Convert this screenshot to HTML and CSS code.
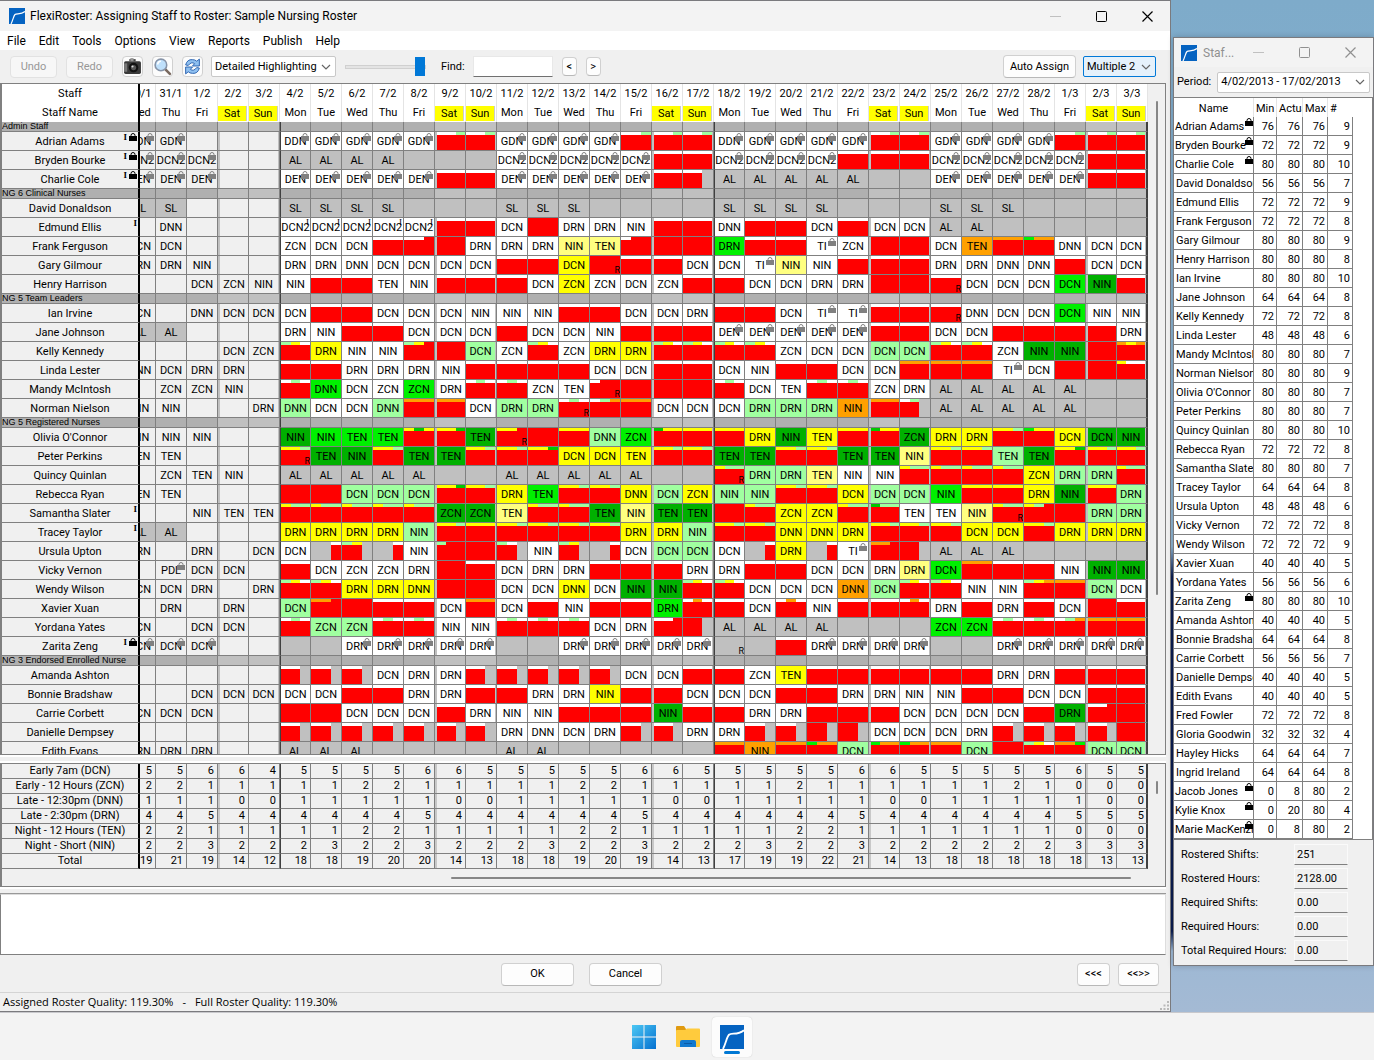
FILE: index.html
```html
<!DOCTYPE html>
<html lang="en">
<head>
<meta charset="utf-8">
<title>FlexiRoster: Assigning Staff to Roster: Sample Nursing Roster</title>
<link rel="stylesheet" href="styles.css">
</head>
<body>
<svg class="defs" aria-hidden="true">
  <symbol id="lock" viewBox="0 0 8 8"><path d="M2 4V2.500Q2 .5 4 .5T6 2.500V4" fill="none" stroke="currentColor"/><rect x="0" y="3" width="8" height="5" fill="currentColor"/></symbol>
  <symbol id="app" viewBox="0 0 16 16"><rect width="16" height="16" fill="#0563c1"/><path d="M2 16C4 12 4.500 8 6 6.500S12 7 16 3.500" fill="none" stroke="#fff" stroke-width="1.200"/></symbol>
  <symbol id="chev" viewBox="0 0 10 6"><path d="M1 1l4 4 4-4" fill="none" stroke="#666" stroke-width="1.200"/></symbol>
  <symbol id="min" viewBox="0 0 11 11"><path d="M0 5.500h11" stroke="currentColor"/></symbol>
  <symbol id="max" viewBox="0 0 11 11"><rect x=".5" y=".5" width="10" height="10" rx="1" fill="none" stroke="currentColor"/></symbol>
  <symbol id="close" viewBox="0 0 11 11"><path d="M.5.5l10 10M10.500.5l-10 10" stroke="currentColor" stroke-width="1.200"/></symbol>
</svg>
<div class="desktop">
  <main class="window main-window">
    <header class="titlebar">
      <svg class="app-icon"><use href="#app"/></svg>
      <h1>FlexiRoster: Assigning Staff to Roster: Sample Nursing Roster</h1>
      <div class="caption">
        <button aria-label="Minimize" class="faded"><svg><use href="#min"/></svg></button>
        <button aria-label="Maximize"><svg><use href="#max"/></svg></button>
        <button aria-label="Close"><svg><use href="#close"/></svg></button>
      </div>
    </header>
    <nav class="menubar">
      <button>File</button><button>Edit</button><button>Tools</button><button>Options</button><button>View</button><button>Reports</button><button>Publish</button><button>Help</button>
    </nav>
    <div class="toolbar">
      <button class="btn undo" disabled>Undo</button>
      <button class="btn undo" disabled>Redo</button>
      <div class="icons">
      <button class="tool" aria-label="Snapshot"><svg viewBox="0 0 18 18"><path d="M6 4V2h6v2z" fill="#444"/><rect x="1" y="4" width="16" height="12" rx="1.500" fill="#3a3a3a"/><rect x="1" y="6" width="3" height="8" fill="#777"/><rect x="7" y="1" width="3" height="3" fill="#999"/><circle cx="10" cy="10" r="4.500" fill="#111"/><circle cx="10" cy="10" r="2.500" fill="#555"/><circle cx="9" cy="9" r="1" fill="#ddd"/></svg></button>
      <button class="tool" aria-label="Zoom"><svg viewBox="0 0 18 18"><path d="M11 11l5 5" stroke="#7a6a60" stroke-width="2.500" stroke-linecap="round"/><circle cx="7.500" cy="7.500" r="5.500" fill="#bfe0fb" stroke="#8794a8" stroke-width="1.500"/><path d="M4.500 7a3 3 0 0 1 3-3" fill="none" stroke="#fff" stroke-width="1.500"/></svg></button>
      <button class="tool" aria-label="Refresh"><svg viewBox="0 0 18 18"><g id="arc"><path d="M2.500 7.500Q4 2 9 2.500Q11.500 2.500 13 4L15.500 2V8.500H9L11 6.300Q8 4 5 8z" fill="#8fc0f0" stroke="#2a62b0" stroke-width=".9"/></g><use href="#arc" transform="rotate(180 9 9)"/></svg></button>
      </div>
      <div class="combo highlight"><select aria-label="Highlighting"><option>Detailed Highlighting</option></select><svg><use href="#chev"/></svg></div>
      <input class="slider" type="range" min="0" max="100" value="100" aria-label="Scale">
      <label class="find">Find: <input type="text"></label>
      <button class="btn step">&lt;</button>
      <button class="btn step">&gt;</button>
      <div class="right">
        <button class="btn auto">Auto Assign</button>
        <div class="combo multiple"><select aria-label="Mode"><option>Multiple 2</option></select><svg><use href="#chev"/></svg></div>
      </div>
    </div>
    <section class="pane roster-pane">
      <table class="roster" id="roster"></table>
      <div class="vbar"><span></span></div>
    </section>
    <div class="splitter"></div>
    <section class="pane summary-pane">
      <div class="summary-row">
        <table class="roster summary" id="summary"></table>
        <div class="vbar short"><span></span></div>
      </div>
      <div class="hbar"><span></span></div>
    </section>
    <div class="splitter low"></div>
    <textarea class="memo" aria-label="Messages" readonly></textarea>
    <div class="actions">
      <span></span>
      <div class="mid"><button class="btn big">OK</button><button class="btn big">Cancel</button></div>
      <div class="end"><button class="btn nav">&lt;&lt;&lt;</button><button class="btn nav wide">&lt;&lt;&gt;&gt;</button></div>
    </div>
    <footer class="status"><span>Assigned Roster Quality: 119.30%</span><span>-</span><span>Full Roster Quality: 119.30%</span>
      <svg class="grip" viewBox="0 0 9 9" fill="#b8b8b8"><path d="M7 0h2v2H7zM7 3.500h2v2H7zM3.500 3.500h2v2h-2zM0 7h2v2H0zM3.500 7h2v2h-2zM7 7h2v2H7z"/></svg></footer>
  </main>
  <aside class="window staff-window">
    <header class="titlebar inactive">
      <svg class="app-icon"><use href="#app"/></svg>
      <h2>Staf...</h2>
      <div class="caption">
        <button aria-label="Minimize" class="faded"><svg><use href="#min"/></svg></button>
        <button aria-label="Maximize"><svg><use href="#max"/></svg></button>
        <button aria-label="Close"><svg><use href="#close"/></svg></button>
      </div>
    </header>
    <div class="period"><label for="period">Period:</label><div class="combo"><select id="period"><option>4/02/2013 - 17/02/2013</option></select><svg><use href="#chev"/></svg></div></div>
    <div class="staff-pane"><table class="staff" id="staff"></table></div>
    <div class="totals">
      <label for="t1">Rostered Shifts:</label><input id="t1" value="251" readonly>
      <label for="t2">Rostered Hours:</label><input id="t2" value="2128.00" readonly>
      <label for="t3">Required Shifts:</label><input id="t3" value="0.00" readonly>
      <label for="t4">Required Hours:</label><input id="t4" value="0.00" readonly>
      <label for="t5">Total Required Hours:</label><input id="t5" value="0.00" readonly>
    </div>
  </aside>
</div>
<nav class="taskbar">
  <button aria-label="Start"><svg viewBox="0 0 24 24"><defs><linearGradient id="win" x1="0" y1="0" x2="1" y2="1"><stop offset="0" stop-color="#4cc8f4"/><stop offset="1" stop-color="#0470d0"/></linearGradient></defs><path d="M0 0h11.500v11.500H0zM12.500 0H24v11.500H12.500zM0 12.500h11.500V24H0zM12.500 12.500H24V24H12.500z" fill="url(#win)"/></svg></button>
  <button aria-label="File Explorer"><svg viewBox="0 0 24 24"><path d="M0 2q0-1 1-1h7l2 3v4H0z" fill="#e09a10"/><path d="M0 6q0-1 1-1h8l2-1.500h12q1 0 1 1V21q0 1-1 1H1q-1 0-1-1z" fill="#ffcb3d"/><path d="M4 22v-5q0-2 2-2h12q2 0 2 2v5z" fill="#1279cf"/><path d="M8 18.500h8" stroke="#0a5aa6"/></svg></button>
  <button aria-label="FlexiRoster" class="active"><svg viewBox="0 0 24 24"><use href="#app" width="24" height="24"/></svg></button>
</nav>
<script src="app.js"></script>
</body>
</html>
```
FILE: styles.css
```css
:root {
  --ui: Roboto, "Open Sans", sans-serif;
  --grid-font: Roboto, "Liberation Sans", Arial, sans-serif;
  --face: #f0f0f0;
  --line: #808080;
}
* { box-sizing: border-box; }
body {
  margin: 0;
  height: 100vh;
  display: flex;
  flex-direction: column;
  overflow: hidden;
  font: 11px/16px var(--grid-font);
  color: #000;
}
button, input, select, textarea { font: inherit; color: inherit; margin: 0; }
h1, h2 { margin: 0; font: 12px/16px var(--ui); }
.defs { position: absolute; width: 0; height: 0; }

.desktop {
  flex: 1;
  min-height: 0;
  display: flex;
  align-items: flex-start;
  gap: 2px;
  background: linear-gradient(#7eabca 0, #8cb2d0 54%, #0a1c50 57%, #0a1c50 92%, #9db8d4 94%, #a4bad4 100%);
}
.window { display: flex; flex-direction: column; background: var(--face); border: 1px solid #7a7a7e; }
.main-window { flex: 1; min-width: 0; height: 100%; border-left: 0; }
.staff-window { width: 201px; margin-top: 37px; box-shadow: 0 0 6px #00000030; }

.titlebar { display: flex; align-items: center; height: 30px; padding-left: 9px; background: #f3f3f3; gap: 5px; }
.app-icon { width: 16px; height: 16px; flex: none; }
.caption { margin-left: auto; display: flex; }
.caption button { width: 46px; padding: 0; border: 0; background: none; display: flex; justify-content: center; }
.caption svg { width: 11px; height: 11px; }
.caption .faded { color: #c0c0c0; }
.inactive { color: #909090; padding: 0; padding-left: 7px; gap: 6px; height: 29px; }
.inactive .caption { margin-right: -1px; }
.inactive .caption button { padding-right: 9px; }

.menubar { display: flex; height: 19px; background: #fff; }
.menubar button { border: 0; background: none; padding: 0 6px 0 7px; font: 12px/18px var(--ui); }
.toolbar { display: flex; align-items: center; height: 33px; padding: 0 14px 0 10px; gap: 9px; }
.btn { background: #fdfdfd; border: 1px solid #d0d0d0; border-bottom-color: #b8b8b8; border-radius: 4px; padding: 0; }
.btn.undo { width: 47px; height: 22px; }
.btn:disabled { color: #989898; border-color: #e2e2e2; background: #f7f7f7; }
.icons { display: flex; gap: 9px; }
.tool { width: 21px; height: 21px; border: 1px solid #d0d0d0; border-radius: 4px; background: #fcfcfc; padding: 0; display: flex; }
.tool svg { width: 19px; height: 19px; }
.combo { display: flex; align-items: center; height: 21px; background: #fff; border: 1px solid #c8c8c8; border-radius: 2px; padding: 0 4px 0 3px; }
.combo select { appearance: none; border: 0; background: none; padding: 0; flex: 1; min-width: 0; outline: 0; }
.combo svg { width: 10px; height: 6px; flex: none; }
.highlight { width: 125px; margin-left: -1px; }
.slider { appearance: none; width: 81px; height: 20px; background: none; }
.slider::-webkit-slider-runnable-track { height: 4px; background: #e4e4e4; border: 1px solid #d0d0d0; }
.slider::-webkit-slider-thumb { appearance: none; width: 10px; height: 19px; margin-top: -9px; background: #0078d7; }
.find { display: flex; align-items: center; gap: 8px; padding-left: 6px; }
.find input { width: 80px; height: 21px; border: 1px solid #e8e8e8; border-bottom-color: #707070; background: #fff; }
.btn.step { width: 15px; height: 19px; }
.right { margin-left: auto; display: flex; gap: 7px; align-items: center; }
.btn.auto { width: 73px; height: 23px; }
.multiple { width: 73px; background: #e5f1fb; border-color: #0078d7; }

.pane { border: 1px solid var(--line); border-left-width: 2px; margin-right: 4px; background: var(--face); }
.roster-pane { flex: 1; min-height: 0; overflow: hidden; display: flex; }
.roster { table-layout: fixed; border-collapse: separate; border-spacing: 0; width: 1146px; flex: none; cursor: default; }
.roster .c-name { width: 138px; }
.roster .c-clip { width: 16px; }
.roster .c-day { width: 31px; }
.roster th, .roster td { padding: 0; height: 19px; font-weight: normal; text-align: center; line-height: 18px; overflow: hidden; white-space: nowrap; border-bottom: 1px solid var(--line); border-right: 1px solid var(--line); }
.roster thead th { background: #fff; border-color: #e4e4e4; border-bottom: 0; padding-top: 1px; line-height: 18px; }
.roster thead span { display: block; }
.roster thead .sat span, .roster thead .sun span { background: #ff0; height: 15px; line-height: 16px; margin-right: 1px; border-right: 1px solid #ccc; }
.roster .who { position: relative; border-right: 2px solid #000; background: var(--face); }
.roster tbody .who { padding-top: 1px; line-height: 17px; }
.roster thead .who { background: #fff; border-right-color: #000; }
.roster .group th, .roster .group td { height: 10px; line-height: 9px; background: #b0b0b0; padding-top: 0; }
.roster .group th { text-align: left; font-family: "Liberation Sans", Arial, sans-serif; font-size: 9px; overflow: visible; }
.roster tbody .group .who { padding-top: 0; line-height: 9px; }
.group-in { display: block; height: 9px; line-height: 9px; }

.roster .clip .cell, .roster .clip span { margin-left: -15px; width: 30px; }
.cell { height: 18px; display: flex; position: relative; background: #fff; }
.cell > b { flex: 1; font-weight: normal; min-width: 0; line-height: 20px; }
.past .cell { background: var(--face); }
.roster tbody td.sat { padding-left: 2px; background: #c0c0c0; }
.roster tbody td.sun { padding-right: 1px; background: #c0c0c0; }
.roster .fort { border-left: 1px solid #404040; }
.roster thead .fort { border-left-color: #fff; }
.roster tbody .last { border-right: 2px solid #404040; }

.cell i { flex: 1; background: #f00; }
.cell .w { border-top: 3px solid #fff; }
.cell .g { border-top: 3px solid #a0ffa0; }
.cell .y { border-top: 3px solid #ff0; }
.cell .o { border-top: 3px solid #ffa000; }
.cell .m { border-top: 3px solid #00f000; }
.cell .d { border-top: 3px solid #00c800; }
.cell .n { background: #c0c0c0; }
.cell.bg-n, .past .cell.bg-n { background: #c0c0c0; }
.cell.bg-y { background: #ff0; }
.cell.bg-p { background: #ffff80; }
.cell.bg-g { background: #a0ffa0; }
.cell.bg-m { background: #00f000; }
.cell.bg-d { background: #00b000; }
.cell.bg-o { background: #ffa000; }

/* Marks drawn over the shift code */
.badge { position: absolute; top: 1px; right: 1px; width: 8px; height: 8px; color: #808080; }
.mark-i { position: absolute; top: 0; right: 1px; font: 9px/9px "Liberation Serif", serif; }
.mark-r { position: absolute; right: 0; bottom: 0; font: 9px/8px var(--grid-font); }
.marks { position: absolute; top: 1px; right: 1px; display: flex; gap: 2px; font: bold 9px/9px "Liberation Serif", serif; }
.marks svg { width: 8px; height: 8px; }

.vbar { flex: 1; display: flex; justify-content: center; padding-top: 17px; }
.vbar span { width: 2px; height: 494px; background: #868686; border-radius: 1px; }
.vbar.short span { height: 13px; }
.splitter { height: 8px; flex: none; border-top: 2px solid #fff; border-bottom: 2px solid #fff; margin-right: 4px; }
.splitter.low { height: 7px; border-bottom: 1px solid #999; }
.summary-row { display: flex; }
.roster.summary td { text-align: right; padding: 0 3px 0 0; }
.roster.summary tbody td.sat, .roster.summary tbody td.sun { background: var(--face); }
.roster.summary tbody th, .roster.summary tbody td { height: 15px; line-height: 14px; padding-top: 0; background: var(--face); }
.roster.summary tbody td.sat { box-shadow: inset 2px 0 #c8c8c8; }
.roster.summary tbody td.sun { padding-right: 3px; }
.roster.summary tbody td.last { border-right-width: 2px; padding-right: 2px; }
.hbar { height: 17px; display: flex; padding: 8px 34px 0 449px; }
.hbar span { flex: 1; height: 2px; background: #868686; border-radius: 1px; }
.memo { display: block; height: 61px; flex: none; resize: none; border: 1px solid #ddd; border-left: 1px solid var(--line); border-bottom-color: var(--line); background: #fff; margin-right: 4px; }
.actions { display: grid; grid-template-columns: 1fr auto 1fr; align-items: center; height: 37px; padding: 1px 11px 0 4px; }
.mid { display: flex; gap: 15px; }
.end { display: flex; gap: 8px; justify-content: flex-end; }
.btn.big { width: 73px; height: 23px; }
.btn.nav { width: 33px; height: 23px; }
.btn.wide { width: 41px; }
.status { display: flex; align-items: center; gap: 9px; height: 19px; padding: 0 1px 0 3px; border-top: 1px solid #d4d4d4; font: 11px/16px "Open Sans", "Noto Sans", sans-serif; }
.grip { width: 9px; height: 9px; margin: 6px 0 0 auto; }

.period { display: flex; align-items: center; gap: 6px; height: 30px; padding: 0 3px 0 3px; }
.period .combo { flex: 1; }
.staff-pane { background: #fff; border: 1px solid var(--line); border-left: 0; }
.staff { table-layout: fixed; border-collapse: separate; border-spacing: 0; width: 179px; }
.staff th, .staff td { height: 19px; padding: 1px 2px 0; border-right: 1px solid var(--line); border-bottom: 1px solid var(--line); line-height: 17px; font-weight: normal; white-space: nowrap; overflow: hidden; }
.staff thead th { border-bottom: 0; border-color: #e4e4e4; text-align: left; }
.staff thead th:first-child { text-align: center; }
.staff thead th:last-child { border-right: 0; }
.staff td { text-align: right; }
.staff tbody th { text-align: left; position: relative; }
.staff .locked { padding-left: 1px; }
.staff svg { position: absolute; top: 1px; right: 0; width: 8px; height: 8px; }
.totals { display: grid; grid-template-columns: 1fr 54px; row-gap: 3px; padding: 4px 25px 4px 7px; align-items: center; white-space: nowrap; }
.totals input { height: 21px; width: 54px; padding: 0 2px; background: var(--face); border: 1px solid #fafafa; border-bottom-color: #808080; }

.taskbar { height: 48px; flex: none; display: flex; justify-content: center; align-items: center; gap: 4px; background: #f3f3f3; border-top: 1px solid #c8c8cc; padding-left: 2px; }
.taskbar button { width: 40px; height: 40px; border: 0; border-radius: 4px; background: none; padding: 0; display: flex; align-items: center; justify-content: center; }
.taskbar svg { width: 24px; height: 24px; }
.taskbar .active { background: #fcfcfc; box-shadow: 0 0 1px #bbb; flex-direction: column; gap: 2px; padding-top: 5px; }
.taskbar .active::after { content: ""; width: 16px; height: 3px; border-radius: 2px; background: #0078d4; }
```
FILE: app.js
```js
// Shift codes, one token per day: five earlier days, then four weeks.
// "x" unassigned, "X" unavailable, "_" leave with no shift, "." blank,
// three lower-case letters give the strip colours, ":c" the fill,
// "*" locked, "!" information mark, "+R" request.
const rows = [
  ["Admin Staff"],
  ["Adrian Adams", "GDN* GDN* . . .", "DDN* GDN* GDN* GDN* GDN* wwg wwg", "GDN* GDN* GDN* GDN* wwg wwg wwg", "DDN* GDN* GDN* GDN* GDN* wwg wwg", "GDN* GDN* GDN* GDN* wwg wwg wwg", "IL"],
  ["Bryden Bourke", "DCN2* DCN2* DCN2* . .", "AL AL AL AL _ _ _", "DCN2* DCN2* DCN2* DCN2* DCN2* x x", "DCN2* DCN2* DCN2* DCN2* x x x", "DCN2* DCN2* DCN2* DCN2* DCN2* x x", "IL"],
  ["Charlie Cole", "DEN* DEN* DEN* . .", "DEN* DEN* DEN* DEN* DEN* x x", "DEN* DEN* DEN* DEN* DEN* x wwn", "AL AL AL AL AL _ _", "DEN* DEN* DEN* DEN* DEN* x x", "IL"],
  ["NG 6 Clinical Nurses"],
  ["David Donaldson", "SL SL . . .", "SL SL SL SL _ _ _", "SL SL SL _ _ _ _", "SL SL SL SL _ _ _", "SL SL SL _ _ _ _"],
  ["Edmund Ellis", ". DNN . . .", "DCN2! DCN2! DCN2! DCN2! DCN2! x x", "DCN X DRN DRN NIN x x", "DNN x x DCN x DCN DCN", "AL AL _ _ _ _ _", "I"],
  ["Frank Ferguson", "DCN DCN . . .", "ZCN DCN DCN x wwr X DRN", "DRN DRN NIN:p TEN:p wrr X X", "DRN:m x x TI* ZCN X X", "DCN TEN:o ooo moo DNN DCN DCN"],
  ["Gary Gilmour", "DRN DRN NIN . .", "DRN DRN DNN DCN DCN DCN DCN", "x x DCN:y X+R x x DCN", "DCN TI* NIN:p NIN x x x", "DRN DRN DNN DNN x DCN DCN"],
  ["Henry Harrison", ". . DCN ZCN NIN", "NIN x x TEN NIN x x", "x DCN ZCN:y ZCN DCN ZCN x", "x DCN DCN DRN DRN X X", "x+R DCN DCN DCN DCN:m NIN:d x"],
  ["NG 5 Team Leaders"],
  ["Ian Irvine", "DCN . DNN DCN DCN", "DCN x x DCN DCN DCN NIN", "NIN NIN x x DCN DCN DRN", "x x DCN TI* TI* x x", "x+R DNN DCN DCN DCN:m NIN NIN"],
  ["Jane Johnson", "AL AL . . .", "DRN NIN x x DCN DCN DCN", "x DCN DCN NIN x x x", "DEN* DEN* DEN* DEN* DEN* x x", "DCN DCN x x x x DRN"],
  ["Kelly Kennedy", ". . . DCN ZCN", "gyw DRN:y NIN NIN gyr X DCN:g", "ZCN gyw ZCN DRN:y DRN:y gyw gyw", "gyw gyw ZCN DCN DCN DCN:g DCN:g", "gyw gyw ZCN NIN:d NIN:d X oyo"],
  ["Linda Lester", "DNN DCN DRN DRN .", "x x DRN DRN DRN NIN x", "x x x DCN DCN x x", "DCN NIN x x DCN DCN ooo", "ooo ooo TI* DCN X X yww"],
  ["Mandy McIntosh", ". ZCN ZCN NIN .", "wgw DNN:m DCN ZCN ZCN:m DRN wgw", "wgw ZCN TEN wrr+R X X X", "wgw DCN TEN wgw wgw ZCN DRN", "AL AL AL AL AL _ _"],
  ["Norman Nielson", "NIN NIN . . DRN", "DNN:g DCN DCN DNN:g ooo ooo DCN", "DRN:g DRN:g wgw+R wgo ooo DCN DCN", "DCN DRN:g DRN:g DRN:g NIN:o ooo wgn", "AL AL AL AL AL _ _"],
  ["NG 5 Registered Nurses"],
  ["Olivia O'Connor", "NIN NIN NIN . .", "NIN:d NIN:m TEN:m TEN:m ydy yyd TEN:d", "yyr+R X yyy DNN:g ZCN:m dyy yyy", "yyy DRN:y NIN:d TEN:y yyy dyy ZCN:d", "DRN:y DRN:y yyg myy DCN:y DCN:d NIN:d"],
  ["Peter Perkins", "TEN TEN . . .", "yyg+R TEN:d NIN:d yyg TEN:d TEN:d yyg", "yyg yyd DCN:y DCN:y TEN:y yyg yyg", "TEN:d TEN:d yyg yyg TEN:d TEN:d NIN:p", "yyg yyg TEN:g TEN:d yyd yyg yyg"],
  ["Quincy Quinlan", ". ZCN TEN NIN .", "AL AL AL AL AL _ _", "AL AL AL AL AL _ _", "ygg+R DRN:g DRN:g TEN:p NIN NIN ygg", "ygg ygg ygg ZCN:y DRN:g DRN:g ygg"],
  ["Rebecca Ryan", "TEN TEN . . .", "X X DCN:g DCN:g DCN:g yyd yyg", "DRN:y TEN:m yyg yyg DNN:y DCN:g ZCN:y", "NIN:g NIN:g yyg yyg DCN:y DCN:g DCN:g", "NIN:m yyy yyy DRN:y NIN:d yyy DRN:g"],
  ["Samantha Slater", ". . NIN TEN TEN", "ygg ygg ygg ygg ygg ZCN:d ZCN:d", "TEN:p ygg ygg TEN:d NIN:p TEN:d TEN:d", "X ygg ZCN:y ZCN:y ygg dgg TEN", "TEN NIN:p ygg+R ygr X DRN:g DRN:g", "I"],
  ["Tracey Taylor", "AL AL . . .", "DRN:y DRN:y DRN:y DRN:y NIN:g yyg yyy", "yyg yyg yyg yyg DRN:y DRN:y NIN:g", "yyg yyg DNN:y DNN:y DRN:y yyg yyg", "yyg DCN:y DCN:y yyg DRN:y DRN:y DRN:y", "I"],
  ["Ursula Upton", "DRN . DRN . DCN", "DCN nnw gyn nnw NIN grr X", "gwn NIN gyn nnw DCN DCN:g DCN:g", "DCN nnw DRN:y nnw TI* oor rrn", "AL AL AL _ _ _ _"],
  ["Vicky Vernon", ". PDL* DCN DCN .", "x DCN ZCN ZCN DRN X x", "DCN DRN DRN x x x DRN", "DRN x x DCN DCN DRN DRN:p", "DCN:m ooo x x NIN NIN:d NIN:d"],
  ["Wendy Wilson", "DCN DCN DRN . DRN", "gyw gyw DRN:y DRN:y DNN:y X X", "DCN DCN DNN:y DCN NIN:d NIN:d gyw", "gyw DCN DCN DCN DNN:o DCN:g gyw", "gyw NIN NIN gyo ooo DCN:g DCN"],
  ["Xavier Xuan", ". DRN . DRN .", "DCN:g oor X x x DCN ooo", "DCN x NIN x x DRN:m wow", "x DCN wow NIN x x wow", "DRN x DRN x DCN X x"],
  ["Yordana Yates", "DCN . DCN DCN .", "wgw ZCN:g ZCN:g wgw wgw NIN NIN", "wgw wgw wgw DCN DRN wwr rrn", "AL AL AL AL _ _ _", "ZCN:m ZCN:m wgw wgw wgo ooo ooo"],
  ["Zarita Zeng", "DCN* DCN* DCN* . .", "_ _ DRN* DRN* DRN* DRN* DRN*", "_ _ DRN* DRN* DRN* DRN* DRN*", "_+R _ x DRN* DRN* DRN* DRN*", "_ _ DRN* DRN* DRN* DRN* DRN*", "IL"],
  ["NG 3 Endorsed Enrolled Nurse"],
  ["Amanda Ashton", ". . . . .", "wwn wwn wwn DCN DRN DRN wwn", "wwn wwn wwn wwn DCN DCN x", "x ZCN TEN:y x x x x", "x x DRN DRN x x x"],
  ["Bonnie Bradshaw", ". . DCN DCN DCN", "DCN DCN x x DRN DRN x", "x DRN DRN NIN:y x x DCN", "DCN DCN x x DRN DRN NIN", "NIN x x DCN DCN x x"],
  ["Carrie Corbett", "DCN DCN DCN . .", "X X DCN DCN DCN x DRN", "NIN NIN x x x NIN:d x", "x DRN DRN x x x DCN", "DCN DCN DCN x DRN:d wwr X"],
  ["Danielle Dempsey", ". . . . .", "wwn wwn wwn wwn wwn wwn wwn", "DRN DNN DCN DRN wwn wwn DRN", "DRN wwn wwn rrn rrn DCN DCN", "DCN DRN wwn wwn wwn wwn X"],
  ["Edith Evans", "DRN DRN DRN . .", "AL AL AL _ _ _ _", "AL AL _ _ _ _ _", "ooo NIN:o ooo moo DCN:g moo moo", "ooo DCN:g X gyw oom DCN:g DCN:g"]
];

const summary = [
  ["Early 7am (DCN)", "5 5 6 6 4 5 5 5 5 6 6 5 5 5 5 5 6 6 5 5 5 5 5 6 6 5 5 5 5 5 6 5 5"],
  ["Early - 12 Hours (ZCN)", "2 2 1 1 1 1 1 2 2 1 1 1 1 1 2 2 1 1 1 1 1 2 1 1 1 1 1 1 2 1 0 0 0"],
  ["Late - 12:30pm (DNN)", "1 1 1 0 0 1 1 1 1 1 0 0 1 1 1 1 1 0 0 1 1 1 1 1 0 0 1 1 1 1 1 0 0"],
  ["Late - 2:30pm (DRN)", "4 4 5 4 4 4 4 4 4 5 4 4 4 4 4 4 5 4 4 4 4 4 4 5 4 4 4 4 4 4 5 5 5"],
  ["Night - 12 Hours (TEN)", "2 2 1 1 1 1 1 2 2 1 1 1 1 1 2 2 1 1 1 1 1 2 2 1 1 1 1 1 1 1 0 0 0"],
  ["Night - Short (NIN)", "2 2 3 2 2 2 3 2 2 3 2 2 2 3 2 2 3 2 2 2 3 2 2 3 2 2 2 2 2 2 3 3 3"],
  ["Total", "19 21 19 14 12 18 18 19 20 20 14 13 18 18 19 20 19 14 13 17 19 19 22 21 14 13 18 18 18 18 18 13 13"]
];

const staff = `Adrian Adams*,76,76,76,9
Bryden Bourke*,72,72,72,9
Charlie Cole*,80,80,80,10
David Donaldson,56,56,56,7
Edmund Ellis,72,72,72,9
Frank Ferguson,72,72,72,8
Gary Gilmour,80,80,80,9
Henry Harrison,80,80,80,8
Ian Irvine,80,80,80,10
Jane Johnson,64,64,64,8
Kelly Kennedy,72,72,72,8
Linda Lester,48,48,48,6
Mandy McIntosh,80,80,80,7
Norman Nielson,80,80,80,9
Olivia O'Connor,80,80,80,7
Peter Perkins,80,80,80,7
Quincy Quinlan,80,80,80,10
Rebecca Ryan,72,72,72,8
Samantha Slater,80,80,80,7
Tracey Taylor,64,64,64,8
Ursula Upton,48,48,48,6
Vicky Vernon,72,72,72,8
Wendy Wilson,72,72,72,9
Xavier Xuan,40,40,40,5
Yordana Yates,56,56,56,6
Zarita Zeng*,80,80,80,10
Amanda Ashton,40,40,40,5
Bonnie Bradshaw,64,64,64,8
Carrie Corbett,56,56,56,7
Danielle Dempsey,40,40,40,5
Edith Evans,40,40,40,5
Fred Fowler,72,72,72,8
Gloria Goodwin,32,32,32,4
Hayley Hicks,64,64,64,7
Ingrid Ireland,64,64,64,8
Jacob Jones*,0,8,80,2
Kylie Knox*,0,20,80,4
Marie MacKenzie*,0,8,80,2`.split("\n").map(r => r.split(","));

const DAYS = 33;
const names = ["Mon", "Tue", "Wed", "Thu", "Fri", "Sat", "Sun"];
const weekday = i => (i + 2) % 7;
const start = Date.UTC(2013, 0, 30);
const dateLabel = i => {
  const d = new Date(start + i * 864e5);
  return d.getUTCDate() + "/" + (d.getUTCMonth() + 1);
};
const lock = cls => `<svg class="${cls}"><use href="#lock"/></svg>`;

function dayClass(i) {
  const c = [];
  if (i === 0) c.push("clip");
  if (i < 5) c.push("past");
  if (weekday(i) === 5) c.push("sat");
  if (weekday(i) === 6) c.push("sun");
  if (i === 5 || i === 19) c.push("fort");
  if (i === DAYS - 1) c.push("last");
  return c.join(" ");
}

function cell(token) {
  let extra = "";
  if (token.endsWith("+R")) { extra += '<span class="mark-r">R</span>'; token = token.slice(0, -2); }
  if (token.endsWith("*")) { extra += lock("badge"); token = token.slice(0, -1); }
  if (token.endsWith("!")) { extra += '<span class="mark-i">I</span>'; token = token.slice(0, -1); }
  if (token === ".") return '<div class="cell"></div>';
  if (token === "_") return `<div class="cell bg-n">${extra}</div>`;
  if (token === "x") token = "www";
  if (token === "X") token = "rrr";
  if (/^[a-z]{3}$/.test(token))
    return `<div class="cell">${[...token].map(s => `<i class="${s}"></i>`).join("")}${extra}</div>`;
  let [text, fill] = token.split(":");
  if (text === "AL" || text === "SL") fill = "n";
  return `<div class="cell${fill ? " bg-" + fill : ""}"><b>${text}</b>${extra}</div>`;
}

const range = [...Array(DAYS).keys()];
const cols = '<colgroup><col class="c-name"><col class="c-clip">' + '<col class="c-day">'.repeat(DAYS - 1) + "</colgroup>";
const headRow = (label, f) => `<tr><th class="who">${label}</th>` + range.map(f).join("") + "</tr>";

document.getElementById("roster").innerHTML = cols +
  "<thead>" +
  headRow("Staff", i => `<th class="${i === 0 ? "clip" : ""}"><span>${dateLabel(i)}</span></th>`) +
  headRow("Staff Name", i => `<th class="${dayClass(i)}"><span>${names[weekday(i)]}</span></th>`) +
  "</thead><tbody>" +
  rows.map(r => {
    if (r.length === 1)
      return `<tr class="group"><th class="who"><span class="group-in">${r[0]}</span></th>` + range.map(i => `<td class="${dayClass(i)}"></td>`).join("") + "</tr>";
    const marks = r[6] || "";
    const m = marks ? `<span class="marks">I${marks.includes("L") ? lock("") : ""}</span>` : "";
    const tokens = r.slice(1, 6).join(" ").split(" ");
    return `<tr><th class="who">${r[0]}${m}</th>` + tokens.map((t, i) => `<td class="${dayClass(i)}">${cell(t)}</td>`).join("") + "</tr>";
  }).join("") + "</tbody>";

document.getElementById("summary").innerHTML = cols + "<tbody>" +
  summary.map(([label, v]) => `<tr><th class="who">${label}</th>` + v.split(" ").map((n, i) => `<td class="${dayClass(i)}">${n}</td>`).join("") + "</tr>").join("") + "</tbody>";

document.getElementById("staff").innerHTML =
  '<colgroup><col width="80"><col width="23"><col width="26"><col width="25"><col width="25"></colgroup>' +
  "<thead><tr><th>Name</th><th>Min</th><th>Actual</th><th>Max</th><th>#</th></tr></thead><tbody>" +
  staff.map(([n, ...v]) => {
    const locked = n.endsWith("*");
    return `<tr><th${locked ? ' class="locked"' : ""}>${n.replace("*", "")}${locked ? lock("") : ""}</th>` + v.map(x => `<td>${x}</td>`).join("") + "</tr>";
  }).join("") + "</tbody>";
```
